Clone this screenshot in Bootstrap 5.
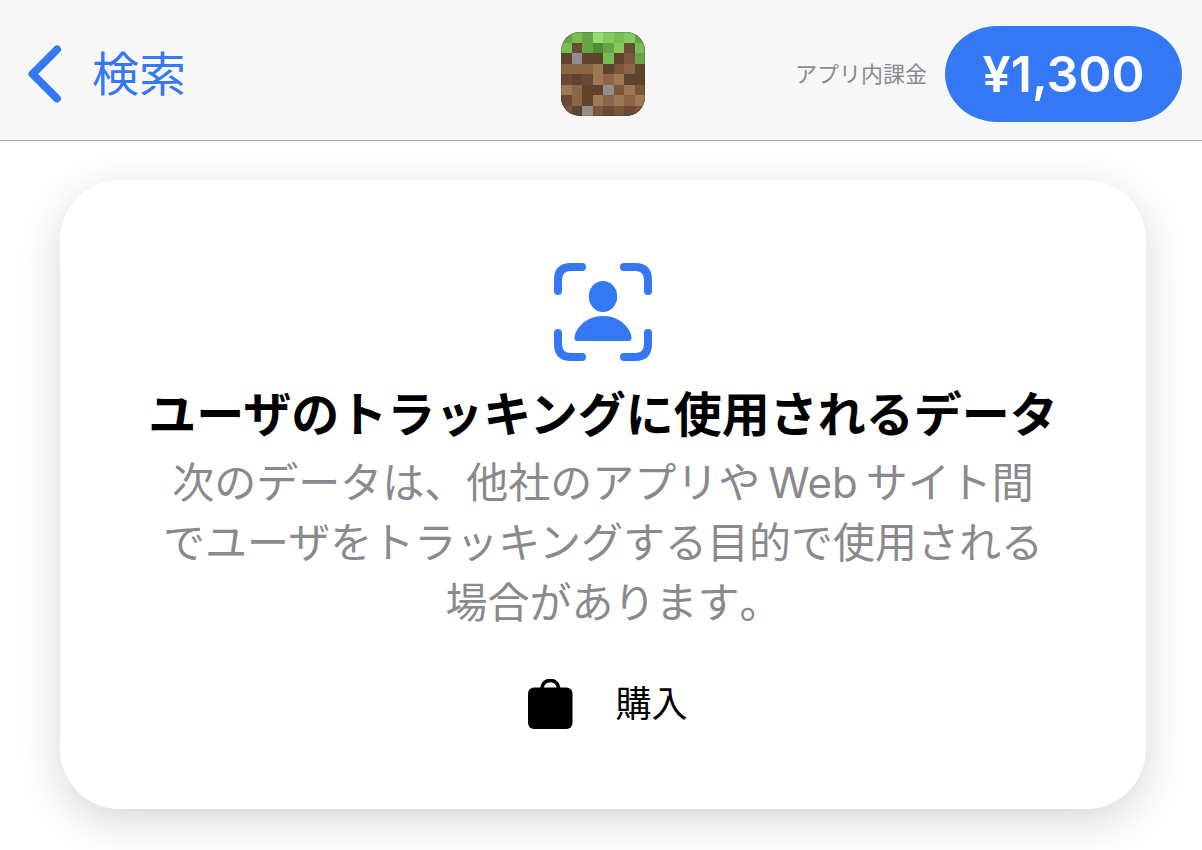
<!DOCTYPE html>
<html lang="ja">
<head>
<meta charset="utf-8">
<meta name="viewport" content="width=device-width, initial-scale=1">
<title>アプリのプライバシー</title>
<link rel="stylesheet" href="https://cdn.jsdelivr.net/npm/bootstrap@5.3.0/dist/css/bootstrap.min.css">
<style>
  :root { --ios-blue: #3478f6; --ios-gray: #8a8a8e; }
  body { font-family: Inter, "Noto Sans CJK JP", sans-serif; color: #000; background: #fff; }
  .topbar { height: 141px; padding: 8px 20px 0 24px; background: #f7f7f8; border-bottom: 1px solid #b2b2b2; }
  .side { flex: 1 1 0; }
  .back { gap: 30px; padding-left: 4px; color: var(--ios-blue); font-size: 47px; line-height: 60px; }
  .iap-row { gap: 18px; }
  .iap { font-size: 22px; color: var(--ios-gray); }
  .price { width: 237px; height: 96px; border-radius: 52px / 48px; background: var(--ios-blue); color: #fff; font-size: 50px; font-weight: 600; line-height: 1; }
  .price:hover { background: #2a6be6; color: #fff; }
  .privacy { margin: 39px 56px 41px 60px; padding: 83px 24px 74px; border-radius: 60px; box-shadow: 0 12px 44px rgba(0,0,0,.16); }
  .privacy h1 { font-size: 48px; line-height: 60px; font-weight: 700; margin: 24px 0 8px; }
  .desc { font-size: 42px; line-height: 60px; color: var(--ios-gray); padding: 0 68px; }
  .latin { margin: 0 8px; }
  .stop { font-feature-settings: "halt" 1; }
  .kinds { gap: 42px; margin-top: 41px; margin-bottom: 1px; padding-left: 10px; font-size: 36px; line-height: 60px; }
</style>
</head>
<body>
<header class="topbar d-flex align-items-center">
  <div class="side d-flex align-items-center">
    <a href="#" class="back d-flex align-items-center text-decoration-none">
      <svg width="34" height="58" viewBox="0 0 34 58" fill="none" stroke="currentColor" stroke-width="8" stroke-linecap="round" stroke-linejoin="round" aria-hidden="true"><path d="M29 4.500L4.500 29L29 53.500"/></svg>
      <span>検索</span>
    </a>
  </div>
  <svg width="84" height="84" viewBox="0 0 8 8" role="img" aria-label="Minecraft">
    <clipPath id="tile"><rect width="8" height="8" rx="1.800"/></clipPath>
    <g clip-path="url(#tile)" shape-rendering="crispEdges">
      <rect width="8" height="8" fill="#5f432f"/>
      <path fill="#66a545" d="M0 0h1v1H0zM2 0h1v1H2zM7 0h1v1H7zM2 1h1v1H2zM4 1h1v1H4zM7 2h1v1H7z"/>
      <path fill="#76bd52" d="M1 0h1v1H1zM5 0h1v1H5zM0 1h1v1H0zM7 1h1v1H7zM4 2h1v1H4z"/>
      <path fill="#82cb5c" d="M4 0h1v1H4zM6 0h1v1H6zM5 1h1v1H5z"/>
      <path fill="#97d972" d="M3 0h1v1H3z"/>
      <path fill="#4f8c34" d="M3 1h1v1H3z"/>
      <path fill="#948d8b" d="M1 2h1v1H1zM4 5h1v1H4zM2 7h1v1H2z"/>
      <path fill="#6b4a33" d="M1 1h1v1H1zM6 1h1v1H6zM0 4h1v1H0zM2 4h1v1H2zM0 6h1v1H0zM4 7h1v1H4zM6 7h1v1H6z"/>
      <path fill="#7a563c" d="M6 2h1v1H6zM5 3h1v1H5zM5 5h1v1H5zM7 5h1v1H7zM0 7h1v1H0zM3 7h1v1H3zM5 7h1v1H5zM7 7h1v1H7z"/>
      <path fill="#8b6547" d="M0 3h3v1H0zM6 3h1v1H6zM4 4h1v1H4zM1 5h1v1H1zM1 6h1v1H1zM4 6h1v1H4zM6 6h1v1H6z"/>
      <path fill="#a07755" d="M3 3h1v1H3zM3 4h1v1H3zM5 4h1v1H5zM0 5h1v1H0zM6 5h1v1H6zM3 6h1v1H3zM5 6h1v1H5zM7 6h1v1H7z"/>
    </g>
    <rect x=".05" y=".05" width="7.900" height="7.900" rx="1.750" fill="none" stroke="#000" stroke-opacity=".12" stroke-width=".1"/>
  </svg>
  <div class="side iap-row d-flex align-items-center justify-content-end">
    <span class="iap">アプリ内課金</span>
    <button type="button" class="btn price border-0 p-0">¥1,300</button>
  </div>
</header>
<main>
  <section class="privacy bg-white text-center">
    <svg class="d-block mx-auto" width="98" height="98" viewBox="0 0 98 98" aria-hidden="true">
      <g fill="none" stroke="#3478f6" stroke-width="8" stroke-linecap="round"><path d="M4 28V17Q4 4 17 4H28M70 4H81Q94 4 94 17V28M94 70V81Q94 94 81 94H70M28 94H17Q4 94 4 81V70"/></g>
      <g fill="#3478f6"><ellipse cx="49" cy="33.500" rx="14.200" ry="15.500"/><path d="M23 78Q20.500 78 20.500 75C20.500 67 31 53 49 53S77.500 67 77.500 75Q77.500 78 75 78Z"/></g>
    </svg>
    <h1>ユーザのトラッキングに使用されるデータ</h1>
    <p class="desc mb-0">次のデータは、他社のアプリや<span class="latin">Web</span>サイト間でユーザをトラッキングする目的で使用される場合があります<span class="stop">。</span></p>
    <div class="kinds d-flex align-items-center justify-content-center">
      <svg width="45" height="50" viewBox="0 0 45 50" aria-hidden="true"><rect y="8.500" width="44.500" height="41.500" rx="6"/><path d="M14 10C14 -1.500 30.500 -1.500 30.500 10" fill="none" stroke="#000" stroke-width="3.500"/></svg>
      <span>購入</span>
    </div>
  </section>
</main>
<script src="https://cdn.jsdelivr.net/npm/bootstrap@5.3.0/dist/js/bootstrap.bundle.min.js"></script>
</body>
</html>
